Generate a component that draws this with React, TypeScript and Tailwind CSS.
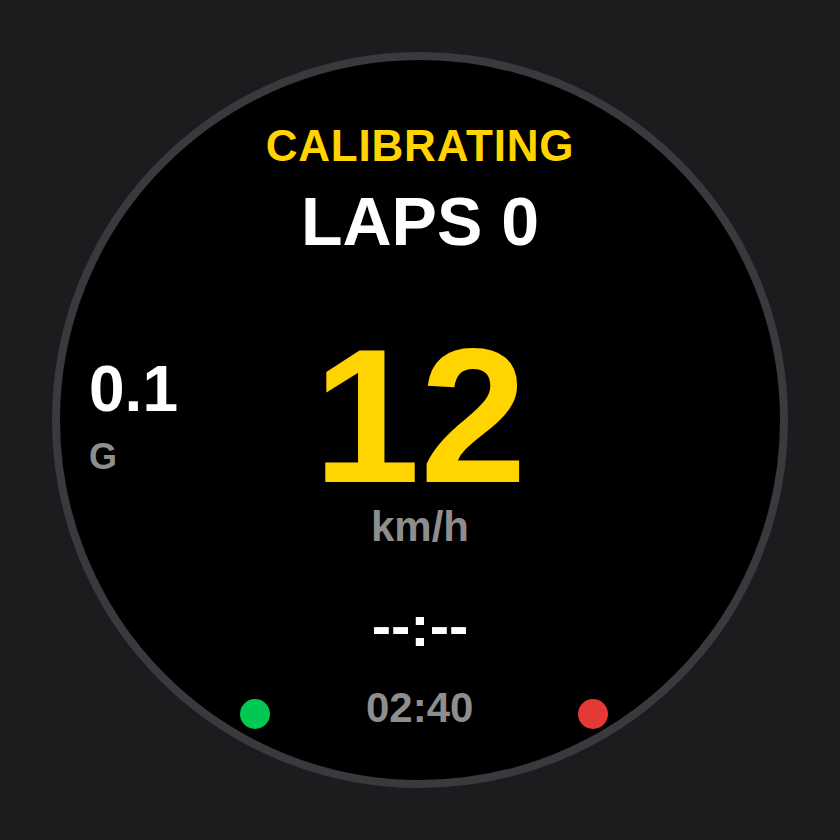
const font = { fontFamily: '"Liberation Sans", Arial, Helvetica, sans-serif' };

const StatusDot = ({ color }: { color: string }) => (
  <div className={`h-[30px] w-[30px] shrink-0 rounded-full ${color}`} />
);

const App = () => {
  return (
    <div
      className="flex h-[840px] w-[840px] items-center justify-center bg-[#1c1c1e]"
      style={font}
    >
      {/* watch face */}
      <div className="h-[736px] w-[736px] overflow-hidden rounded-full border-8 border-[#3a3a3e] bg-black">
        <div className="flex h-full w-full flex-col items-center pt-[64px] font-bold">
          {/* status */}
          <div className="text-[44px] leading-none tracking-[0.8px] text-[#ffd400]">
            CALIBRATING
          </div>
          <div className="mt-[19px] text-[68px] leading-none text-white">
            LAPS 0
          </div>

          {/* speed row */}
          <div className="mt-[81px] grid w-full grid-cols-[1fr_auto_1fr]">
            <div className="flex flex-col items-start pl-[29px] pt-[21px]">
              <div className="text-[64px] leading-none text-white">0.1</div>
              <div className="mt-[18px] text-[36px] leading-none text-[#8e8e8e]">
                G
              </div>
            </div>
            <div className="flex flex-col items-center">
              <div className="text-[192px] leading-[160px] text-[#ffd400]">12</div>
              <div className="mt-[10px] text-[42px] leading-none text-[#8e8e8e]">
                km/h
              </div>
            </div>
            <div />
          </div>

          {/* lap time */}
          <div className="mt-[49px] text-[58px] leading-none text-white">
            --:--
          </div>

          {/* bottom row */}
          <div className="mt-[32px] flex w-full items-end pl-[180px]">
            <StatusDot color="bg-[#00c853]" />
            <div className="ml-[96px] mr-[105px] text-[42px] leading-none text-[#8e8e8e]">
              02:40
            </div>
            <StatusDot color="bg-[#e53935]" />
          </div>
        </div>
      </div>
    </div>
  );
};

export default App;
